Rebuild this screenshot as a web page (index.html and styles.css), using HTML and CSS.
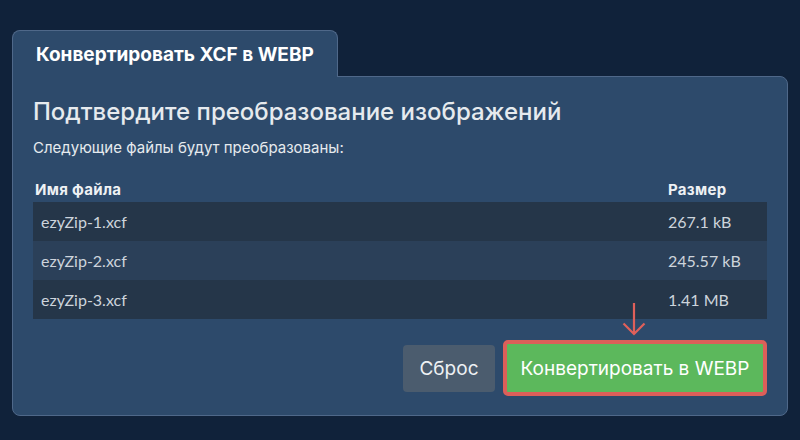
FILE: index.html
```html
<!DOCTYPE html>
<html lang="ru">
<head>
<meta charset="utf-8">
<link rel="stylesheet" href="styles.css">
</head>
<body>
<div class="wrap">
  <div class="tab">Конвертировать XCF в WEBP</div>
  <div class="panel">
    <h1 class="title">Подтвердите преобразование изображений</h1>
    <p class="sub">Следующие файлы будут преобразованы:</p>
    <table class="files">
      <thead>
        <tr><th class="c-name">Имя файла</th><th class="c-size">Размер</th></tr>
      </thead>
      <tbody>
        <tr><td class="c-name">ezyZip-1.xcf</td><td class="c-size">267.1 kB</td></tr>
        <tr><td class="c-name">ezyZip-2.xcf</td><td class="c-size">245.57 kB</td></tr>
        <tr><td class="c-name">ezyZip-3.xcf</td><td class="c-size">1.41 MB</td></tr>
      </tbody>
    </table>
    <div class="actions">
      <button class="btn reset">Сброс</button>
      <div class="go-wrap">
        <svg class="arrow" width="26" height="34" viewBox="0 0 26 34"><path d="M13 1 V32 M2.5 21.5 L13 32 L23.5 21.5" fill="none" stroke="#e0605a" stroke-width="2.2"/></svg>
        <button class="btn go">Конвертировать в WEBP</button>
      </div>
    </div>
  </div>
</div>
</body>
</html>
```
FILE: styles.css
```css
html, body {
  margin: 0;
  padding: 0;
  background: #10223a;
  height: 100%;
}
body {
  font-family: Inter, "Noto Sans", sans-serif;
  color: #e9edf1;
}
.wrap {
  padding: 30px 12px 0 12px;
}
.tab {
  position: relative;
  z-index: 1;
  display: flex;
  align-items: center;
  box-sizing: border-box;
  width: 326px;
  height: 47px;
  margin-bottom: -1px;
  padding-left: 23px;
  background: #2d4a6b;
  border: 1px solid #4f6889;
  border-bottom: none;
  border-radius: 8px 8px 0 0;
  font-weight: 700;
  font-size: 19px;
  letter-spacing: 0;
  color: #ffffff;
}
.panel {
  background: #2d4a6b;
  border: 1px solid #4f6889;
  border-radius: 0 8px 8px 8px;
  padding: 20px 20px 19px 20px;
}
.title {
  margin: 0;
  font-size: 24px;
  line-height: 30px;
  font-weight: 500;
  color: #e6eaee;
}
.sub {
  margin: 11px 0 0 0;
  font-size: 15px;
  line-height: 20px;
  color: #e6eaee;
}
.files {
  margin-top: 19px;
  width: 100%;
  border-collapse: collapse;
}
.files th {
  text-align: left;
  font-size: 15px;
  font-weight: 700;
  letter-spacing: 0.3px;
  color: #eef1f4;
  height: 24px;
  padding: 0 0 1px 2px;
  vertical-align: middle;
}
.files td {
  font-family: Lato, "Noto Sans", sans-serif;
  font-size: 16px;
  letter-spacing: 0;
  color: #cdd4dc;
  height: 39px;
  padding: 0 0 0 8px;
  vertical-align: middle;
}
.files th.c-size { width: 99px; padding-left: 0; }
.files td.c-size { padding-left: 0; }
.files tbody tr:nth-child(odd) { background: #253649; }
.files tbody tr:nth-child(even) { background: #2b4059; }
.actions {
  display: flex;
  justify-content: flex-end;
  align-items: center;
  gap: 8px;
  margin-top: 21px;
}
.btn {
  font-family: Inter, "Noto Sans", sans-serif;
  border: none;
  color: #ffffff;
  font-size: 19px;
  font-weight: 400;
  border-radius: 4px;
  cursor: pointer;
  padding: 0;
}
.reset {
  background: #4b5c6e;
  width: 92px;
  height: 47px;
  color: #eef1f4;
}
.go-wrap {
  position: relative;
}
.arrow {
  position: absolute;
  left: 50%;
  top: -38px;
  margin-left: -14px;
}
.go {
  display: block;
  background: #5cb85c;
  width: 264px;
  height: 56px;
  border: 4px solid #dc5f59;
  border-radius: 5px;
}
```
